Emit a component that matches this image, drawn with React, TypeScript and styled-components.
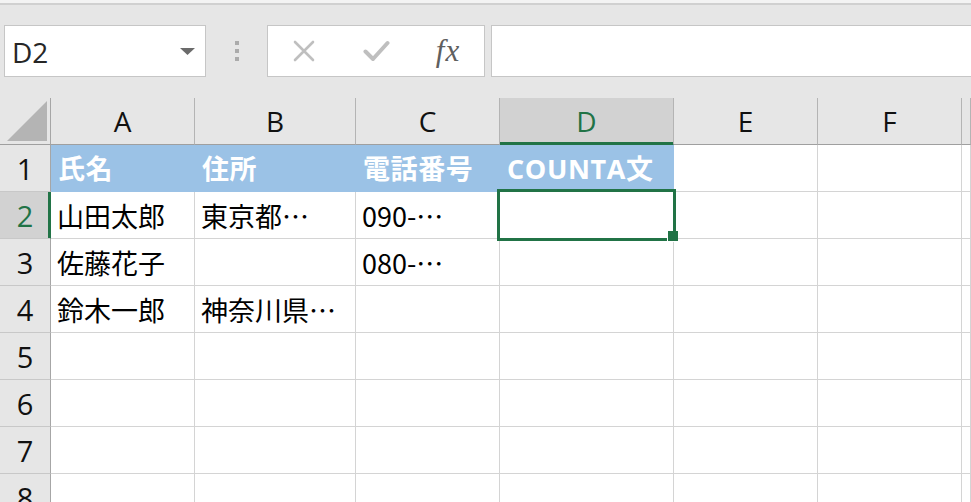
import React from "react";
import styled, { createGlobalStyle } from "styled-components";

const GlobalStyle = createGlobalStyle`
  html, body { margin: 0; padding: 0; }
  body {
    width: 971px;
    height: 502px;
    overflow: hidden;
    background: #e6e6e6;
    font-family: "Open Sans", "Noto Sans CJK JP", sans-serif;
  }
  * { box-sizing: border-box; }
`;

const GREEN = "#217346";
const BLUE = "#9bc2e6";

const Page = styled.div`
  display: flex;
  flex-direction: column;
  width: 971px;
  height: 502px;
  overflow: hidden;
  & > * { flex-shrink: 0; }
`;

const TopStrip = styled.div`
  height: 5px;
  background: #f3f3f3;
  border-bottom: 2px solid #d0d0d0;
`;

const FormulaBar = styled.div`
  display: flex;
  align-items: flex-start;
  padding: 20px 0 21px 4px;
  height: 93px;
  overflow: hidden;
`;

const Box = styled.div`
  height: 52px;
  background: #ffffff;
  border: 1px solid #c6c6c6;
`;

const NameBox = styled(Box)`
  width: 202px;
  display: flex;
  align-items: center;
  justify-content: space-between;
  padding: 0 10px 0 7px;
`;

const NameText = styled.span`
  font-family: "Open Sans", sans-serif;
  font-size: 28px;
  color: #262626;
  line-height: 1;
  margin-top: 2px;
`;

const Grip = styled.div`
  width: 61px;
  height: 52px;
  display: flex;
  flex-direction: column;
  align-items: center;
  justify-content: center;
  gap: 4px;
`;

const GripDot = styled.span`
  width: 4px;
  height: 4px;
  background: #ababab;
`;

const FxButtons = styled(Box)`
  width: 218px;
  display: grid;
  grid-template-columns: repeat(3, 1fr);
  align-items: center;
  justify-items: center;
`;

const FxLabel = styled.span`
  font-family: "Liberation Serif", serif;
  font-style: italic;
  font-size: 31px;
  color: #5f5f5f;
  line-height: 1;
  margin-top: -2px;
  letter-spacing: 1px;
`;

const FormulaInput = styled(Box)`
  flex: 1;
  margin-left: 6px;
  margin-right: -4px;
`;

const Sheet = styled.div`
  position: relative;
  display: grid;
  grid-template-columns: 51px 144px 161px 144px 174px 144px 144px 1fr;
  grid-auto-rows: 47px;
  background: #ffffff;
`;

const Corner = styled.div`
  background: #e6e6e6;
  border-right: 1px solid #a6a6a6;
  border-bottom: 1px solid #9f9f9f;
  display: flex;
  align-items: flex-end;
  justify-content: flex-end;
  padding: 0 3px 3px 0;
`;

const ColHeader = styled.div<{ $selected?: boolean }>`
  background: ${(p) => (p.$selected ? "#d2d2d2" : "#e6e6e6")};
  border-right: 1px solid #b4b4b4;
  border-bottom: 1px solid ${(p) => (p.$selected ? GREEN : "#9f9f9f")};
  box-shadow: ${(p) => (p.$selected ? `inset 0 -2px 0 ${GREEN}` : "none")};
  display: flex;
  align-items: center;
  justify-content: center;
  font-size: 28px;
  color: ${(p) => (p.$selected ? GREEN : "#111")};
  line-height: 1;
  overflow: hidden;
  padding-bottom: 1px;
`;

const RowHeader = styled.div<{ $selected?: boolean }>`
  background: ${(p) => (p.$selected ? "#d2d2d2" : "#e6e6e6")};
  border-right: 1px solid ${(p) => (p.$selected ? GREEN : "#a6a6a6")};
  border-bottom: 1px solid #c8c8c8;
  box-shadow: ${(p) => (p.$selected ? `inset -2px 0 0 ${GREEN}` : "none")};
  display: flex;
  align-items: center;
  justify-content: center;
  font-size: 29px;
  color: ${(p) => (p.$selected ? GREEN : "#111")};
  line-height: 1;
  overflow: hidden;
`;

const Cell = styled.div<{ $fill?: boolean }>`
  background: ${(p) => (p.$fill ? BLUE : "#ffffff")};
  border-right: 1px solid ${(p) => (p.$fill ? BLUE : "#d4d4d4")};
  border-bottom: 1px solid ${(p) => (p.$fill ? BLUE : "#d4d4d4")};
  display: flex;
  align-items: center;
  padding-left: ${(p) => (p.$fill ? "7px" : "6px")};
  white-space: nowrap;
  overflow: hidden;
  line-height: 1;
  ${(p) =>
    p.$fill
      ? `font-family: "Open Sans", "Noto Sans CJK JP", sans-serif;
         font-weight: 700;
         font-size: 27px;
         color: #ffffff;
         letter-spacing: 0.6px;`
      : `font-family: "Noto Sans CJK JP", sans-serif;
         font-weight: 400;
         font-size: 27px;
         color: #000000;`}
`;

const Selection = styled.div`
  position: absolute;
  left: 497px;
  top: 91px;
  width: 179px;
  height: 52px;
  border: 3px solid ${GREEN};
  pointer-events: none;
`;

const FillHandle = styled.div`
  position: absolute;
  left: 667px;
  top: 133px;
  width: 11px;
  height: 11px;
  background: ${GREEN};
  border: 1.5px solid #ffffff;
  border-top: none;
  border-right: none;
`;

const columns = ["A", "B", "C", "D", "E", "F", ""];

type Row = { cells: string[]; fill?: boolean };

const rows: Row[] = [
  { cells: ["氏名", "住所", "電話番号", "COUNTA文", "", "", ""], fill: true },
  { cells: ["山田太郎", "東京都…", "090-…", "", "", "", ""] },
  { cells: ["佐藤花子", "", "080-…", "", "", "", ""] },
  { cells: ["鈴木一郎", "神奈川県…", "", "", "", "", ""] },
  { cells: ["", "", "", "", "", "", ""] },
  { cells: ["", "", "", "", "", "", ""] },
  { cells: ["", "", "", "", "", "", ""] },
  { cells: ["", "", "", "", "", "", ""] },
];

const CancelIcon = () => (
  <svg width="22" height="22" viewBox="0 0 22 22">
    <path d="M2 2 L20 20 M20 2 L2 20" stroke="#bfbfbf" strokeWidth="2.6" strokeLinecap="round" fill="none" />
  </svg>
);

const EnterIcon = () => (
  <svg width="27" height="22" viewBox="0 0 27 22">
    <path d="M2.5 11.5 L10 19 L24.5 3" stroke="#bfbfbf" strokeWidth="4" strokeLinecap="round" strokeLinejoin="round" fill="none" />
  </svg>
);

const Caret = () => (
  <svg width="15" height="7" viewBox="0 0 15 7">
    <polygon points="0,0 15,0 7.5,7" fill="#6b6b6b" />
  </svg>
);

const CornerTriangle = () => (
  <svg width="40" height="40" viewBox="0 0 40 40">
    <polygon points="0,40 40,40 40,0" fill="#b4b4b4" />
  </svg>
);

export default function App() {
  return (
    <>
      <GlobalStyle />
      <Page>
        <TopStrip />
        <FormulaBar>
          <NameBox>
            <NameText>D2</NameText>
            <Caret />
          </NameBox>
          <Grip>
            <GripDot />
            <GripDot />
            <GripDot />
          </Grip>
          <FxButtons>
            <CancelIcon />
            <EnterIcon />
            <FxLabel>fx</FxLabel>
          </FxButtons>
          <FormulaInput />
        </FormulaBar>
        <Sheet>
          <Corner>
            <CornerTriangle />
          </Corner>
          {columns.map((c, i) => (
            <ColHeader key={"h" + i} $selected={c === "D"}>
              {c}
            </ColHeader>
          ))}
          {rows.map((r, ri) => (
            <React.Fragment key={"r" + ri}>
              <RowHeader $selected={ri === 1}>{ri + 1}</RowHeader>
              {r.cells.map((v, ci) => (
                <Cell key={ci} $fill={r.fill && ci < 4}>
                  {v}
                </Cell>
              ))}
            </React.Fragment>
          ))}
          <Selection />
          <FillHandle />
        </Sheet>
      </Page>
    </>
  );
}
